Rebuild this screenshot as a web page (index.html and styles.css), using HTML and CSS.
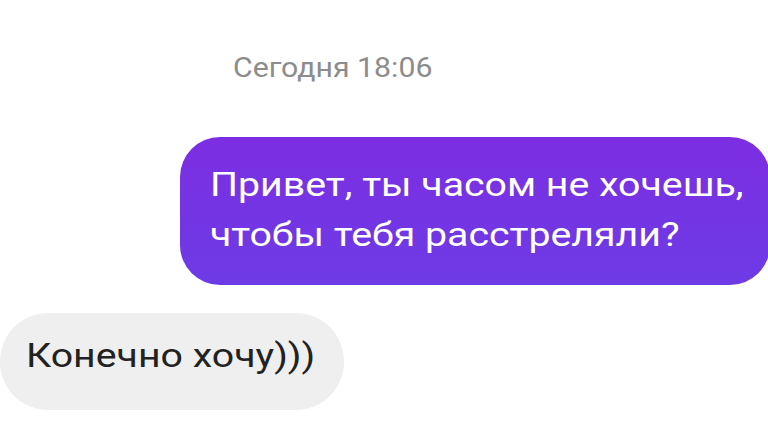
FILE: index.html
```html
<!DOCTYPE html>
<html lang="ru">
<head>
<meta charset="utf-8">
<link rel="stylesheet" href="styles.css">
</head>
<body>
<div class="chat">
  <div class="time"><span class="wide time-text">Сегодня 18:06</span></div>
  <div class="row out">
    <div class="bubble purple"><span class="wide">Привет, ты часом не хочешь,<br>чтобы тебя расстреляли?</span></div>
  </div>
  <div class="row in">
    <div class="bubble gray"><span class="wide">Конечно хочу)))</span></div>
  </div>
</div>
</body>
</html>
```
FILE: styles.css
```css
html, body {
  margin: 0;
  padding: 0;
  background: #ffffff;
  width: 768px;
  height: 442px;
  overflow: hidden;
}
.chat {
  display: flex;
  flex-direction: column;
  font-family: Roboto, "Noto Sans", sans-serif;
  padding-top: 50px;
}
.wide {
  display: inline-block;
  transform: scaleX(1.155);
  transform-origin: left center;
  white-space: nowrap;
}
.time {
  margin-left: 233px;
  font-size: 27px;
  line-height: 36px;
  color: #8c8c8c;
}
.time-text {
  transform: scaleX(1.12);
}
.row {
  display: flex;
}
.row.out {
  justify-content: flex-end;
  margin-top: 51px;
}
.row.in {
  justify-content: flex-start;
  margin-top: 28px;
}
.bubble {
  box-sizing: border-box;
}
.purple {
  width: 590px;
  margin-right: -2px;
  height: 148px;
  padding: 22px 20px 0 30px;
  border-radius: 40px;
  background: linear-gradient(180deg, #7c2ee2 0%, #6d3be6 100%);
  color: #ffffff;
  font-size: 34px;
  line-height: 50px;
}
.gray {
  width: 344px;
  height: 97px;
  padding: 18px 0 0 26px;
  border-radius: 48px;
  background: #efefef;
  color: #222222;
  font-size: 34px;
  line-height: 48px;
}
```
